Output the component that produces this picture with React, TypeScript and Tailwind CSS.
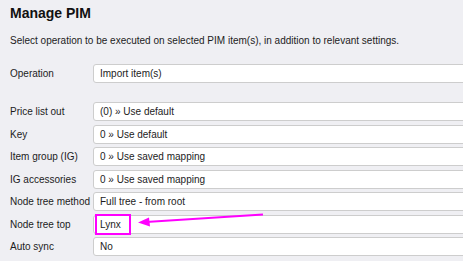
const rows: { label: string; value: string }[] = [
  { label: 'Price list out', value: '(0) » Use default' },
  { label: 'Key', value: '0 » Use default' },
  { label: 'Item group (IG)', value: '0 » Use saved mapping' },
  { label: 'IG accessories', value: '0 » Use saved mapping' },
  { label: 'Node tree method', value: 'Full tree - from root' },
  { label: 'Node tree top', value: 'Lynx' },
  { label: 'Auto sync', value: 'No' },
];

function Field({ label, value, highlight }: { label: string; value: string; highlight?: boolean }) {
  return (
    <div className="flex items-center h-[22.5px]">
      <div className="w-[83px] shrink-0 whitespace-nowrap text-[10px] text-[#1c1c1c]">{label}</div>
      <div className="relative flex items-center h-[19px] w-[420px] shrink-0 rounded-[3px] border border-[#cdcdcd] bg-white pl-[6px] text-[10px] text-[#1c1c1c]">
        {value}
        {highlight && (
          <div className="absolute left-[1px] top-[-2px] h-[21px] w-[36px] border-2 border-[#ff00ff]" />
        )}
      </div>
    </div>
  );
}

export default function App() {
  return (
    <div className="relative h-[261px] w-[463px] overflow-hidden bg-[#efeff3] pl-[10px] font-['Liberation_Sans',Arial,sans-serif]">
      <h1 className="mt-[4px] h-[18px] text-[14px] font-bold leading-[18px] text-[#111]">Manage PIM</h1>
      <p className="mt-[12px] text-[10px] leading-[14px] text-[#1c1c1c]">
        Select operation to be executed on selected PIM item(s), in addition to relevant settings.
      </p>
      <div className="mt-[14px]">
        <Field label="Operation" value="Import item(s)" />
      </div>
      <div className="mt-[16px]">
        {rows.map((r) => (
          <Field key={r.label} label={r.label} value={r.value} highlight={r.value === 'Lynx'} />
        ))}
      </div>
      <svg className="absolute left-0 top-0" width="463" height="261" viewBox="0 0 463 261">
        <line x1="263" y1="214.5" x2="146" y2="222" stroke="#ff00ff" strokeWidth="2" />
        <polygon points="138,222.5 149,217.5 150,226.5" fill="#ff00ff" />
      </svg>
    </div>
  );
}
